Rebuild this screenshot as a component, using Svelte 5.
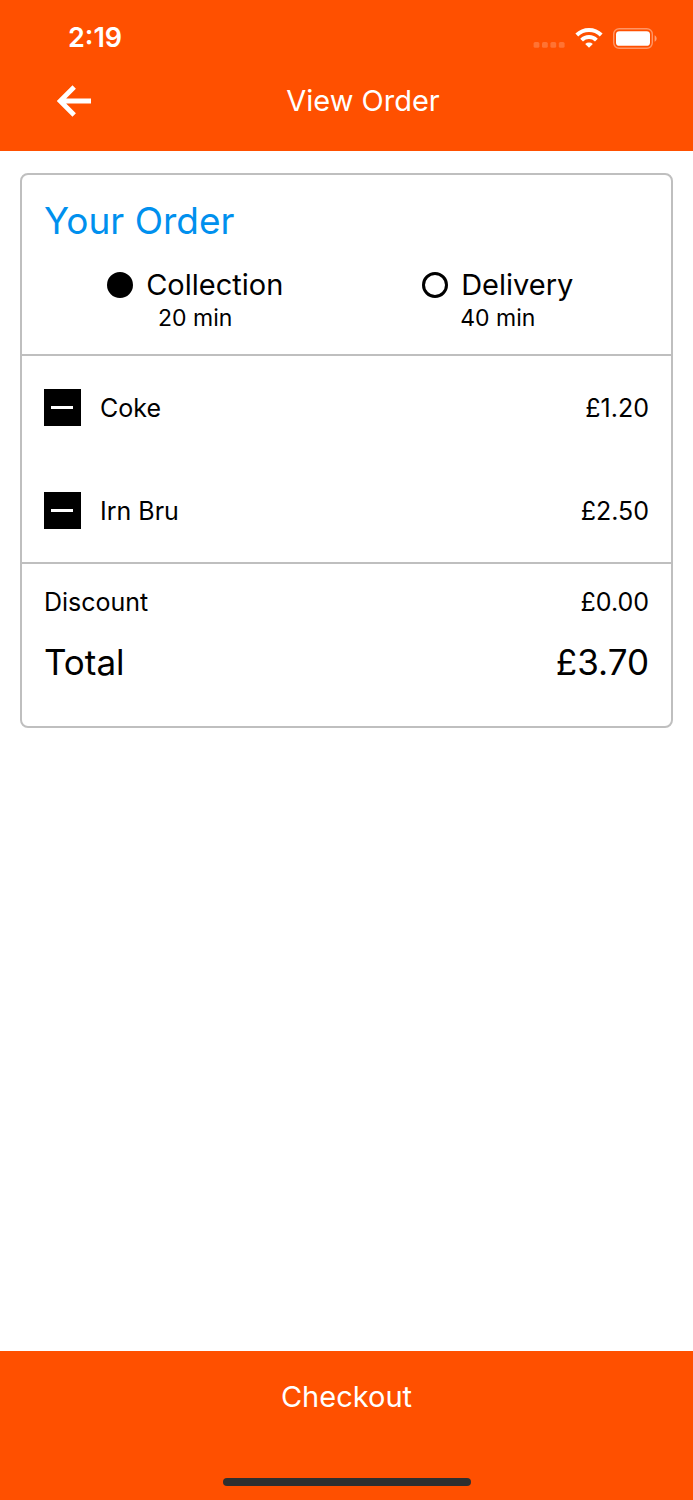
<script lang="ts">
  let method = $state('collection');
  let discount = 0;

  let items = $state([
    { id: 1, name: 'Coke', price: 1.2 },
    { id: 2, name: 'Irn Bru', price: 2.5 },
  ]);

  const methods = [
    { id: 'collection', label: 'Collection', time: '20 min' },
    { id: 'delivery', label: 'Delivery', time: '40 min' },
  ];

  let total = $derived(items.reduce((sum, item) => sum + item.price, 0) - discount);

  function removeItem(id: number) {
    items = items.filter(item => item.id !== id);
  }

  function formatPrice(value: number) {
    return `£${value.toFixed(2)}`;
  }
</script>

<div class="screen">
  <header>
    <div class="status-bar">
      <span class="clock">2:19</span>
      <div class="status-icons">
        <svg class="signal" width="32" height="20" viewBox="0 0 32 20" aria-hidden="true">
          <rect x="0.6" y="14" width="5.8" height="5.8" rx="1.6" />
          <rect x="9" y="14" width="5.8" height="5.8" rx="1.6" />
          <rect x="17.4" y="14" width="5.8" height="5.8" rx="1.6" />
          <rect x="25.8" y="14" width="5.8" height="5.8" rx="1.6" />
        </svg>
        <svg width="28" height="20" viewBox="0 0 28 20" fill="none" stroke="#fff" stroke-width="4" aria-hidden="true">
          <path d="M1.8 7a17.400 17.400 0 0 1 24.400 0" />
          <path d="M6.600 12.100a10.600 10.600 0 0 1 14.800 0" />
          <path d="M14 19.800l-3.800-3.800a5.600 5.600 0 0 1 7.600 0z" fill="#fff" stroke="none" />
        </svg>
        <svg width="44" height="21" viewBox="0 0 44 21" aria-hidden="true">
          <rect x="0.7" y="0.7" width="38.6" height="19.6" rx="5.5" fill="none" stroke="#fff" stroke-opacity="0.4" stroke-width="1.4" />
          <rect x="3" y="3.2" width="34" height="14.6" rx="3.4" fill="#fff" />
          <path d="M41.6 7.2c1.1.4 2 1.7 2 3.3s-.9 2.9-2 3.3z" fill="#fff" fill-opacity="0.45" />
        </svg>
      </div>
    </div>
    <div class="nav-bar">
      <button class="back" aria-label="Back">
        <svg width="34" height="32" viewBox="0 0 34 32" fill="none" stroke="#fff" stroke-width="4.8" aria-hidden="true">
          <path d="M17.2 2L3.2 16l14 14M4 16h30" />
        </svg>
      </button>
      <h1>View Order</h1>
    </div>
  </header>

  <main>
    <div class="card">
      <section class="summary">
        <h2>Your Order</h2>
        <div class="methods">
          {#each methods as option}
            <label class="method">
              <span class="method-name">
                <input type="radio" name="method" value={option.id} bind:group={method} />
                {option.label}
              </span>
              <span class="method-time">{option.time}</span>
            </label>
          {/each}
        </div>
      </section>

      <ul class="items">
        {#each items as item (item.id)}
          <li>
            <button class="remove" onclick={() => removeItem(item.id)} aria-label="Remove {item.name}">
              <svg width="23" height="3" viewBox="0 0 23 3" aria-hidden="true">
                <rect width="22" height="3" fill="#fff" />
              </svg>
            </button>
            <span class="item-name">{item.name}</span>
            <span>{formatPrice(item.price)}</span>
          </li>
        {/each}
      </ul>

      <section class="totals">
        <div class="row">
          <span>Discount</span>
          <span>{formatPrice(discount)}</span>
        </div>
        <div class="row total">
          <span>Total</span>
          <span>{formatPrice(total)}</span>
        </div>
      </section>
    </div>
  </main>

  <footer>
    <button class="checkout">Checkout</button>
    <div class="home-indicator"></div>
  </footer>
</div>

<style>
  :global(body) {
    background: #fff;
  }

  .screen {
    display: flex;
    flex-direction: column;
    min-height: 100vh;
    font-family: Inter, "Liberation Sans", sans-serif;
    font-size: 25px;
    line-height: 32px;
    color: #000;
  }

  h1,
  h2,
  ul {
    margin: 0;
    padding: 0;
    font-weight: 400;
  }

  button {
    border: none;
    padding: 0;
    font: inherit;
    cursor: pointer;
  }

  svg {
    display: block;
  }

  header,
  footer {
    background: #ff5000;
    color: #fff;
  }

  .status-bar {
    display: flex;
    justify-content: space-between;
    align-items: center;
    height: 76px;
    padding: 0 36px 0 68px;
  }

  .clock {
    font-size: 27px;
    font-weight: 600;
  }

  .status-icons {
    display: flex;
    align-items: center;
    gap: 10px;
  }

  .signal {
    fill: rgba(255, 255, 255, 0.2);
  }

  .nav-bar {
    display: flex;
    align-items: center;
    padding: 0 58px 26px 57px;
  }

  .back {
    background: none;
  }

  h1 {
    flex: 1;
    font-size: 29px;
    line-height: 49px;
    text-align: center;
  }

  main {
    flex: 1;
    padding: 22px 20px;
  }

  .card {
    border: 2px solid #bfbfbf;
    border-radius: 8px;
  }

  .summary {
    padding: 22px 22px 20px;
  }

  h2 {
    font-size: 37px;
    line-height: 48px;
    color: #0090ee;
  }

  .methods {
    display: grid;
    grid-template-columns: 1fr 1fr;
    margin-top: 22px;
  }

  .method {
    display: flex;
    flex-direction: column;
    align-items: center;
    cursor: pointer;
  }

  .method-name {
    display: flex;
    align-items: center;
    gap: 13px;
    font-size: 29px;
    line-height: 36px;
  }

  .method-time {
    font-size: 23px;
    line-height: 31px;
  }

  input[type='radio'] {
    appearance: none;
    width: 26px;
    height: 26px;
    margin: 0;
    border: 3px solid #000;
    border-radius: 50%;
  }

  input[type='radio']:checked {
    background: #000;
  }

  .items {
    list-style: none;
    border-top: 2px solid #bfbfbf;
    border-bottom: 2px solid #bfbfbf;
  }

  .items li {
    display: flex;
    align-items: center;
    height: 103px;
    padding: 0 22px;
  }

  .remove {
    display: flex;
    align-items: center;
    justify-content: center;
    width: 37px;
    height: 37px;
    margin-right: 19px;
    background: #000;
  }

  .item-name {
    flex: 1;
  }

  .totals {
    display: flex;
    flex-direction: column;
    gap: 20px;
    padding: 22px 22px 40px;
  }

  .row {
    display: flex;
    justify-content: space-between;
  }

  .total {
    font-size: 35px;
    line-height: 48px;
  }

  footer {
    padding-bottom: 14px;
  }

  .checkout {
    display: block;
    width: 100%;
    height: 92px;
    background: none;
    color: #fff;
    font-size: 29px;
  }

  .home-indicator {
    width: 248px;
    height: 8px;
    margin: 35px auto 0;
    border-radius: 4px;
    background: #2f2f2f;
  }
</style>
